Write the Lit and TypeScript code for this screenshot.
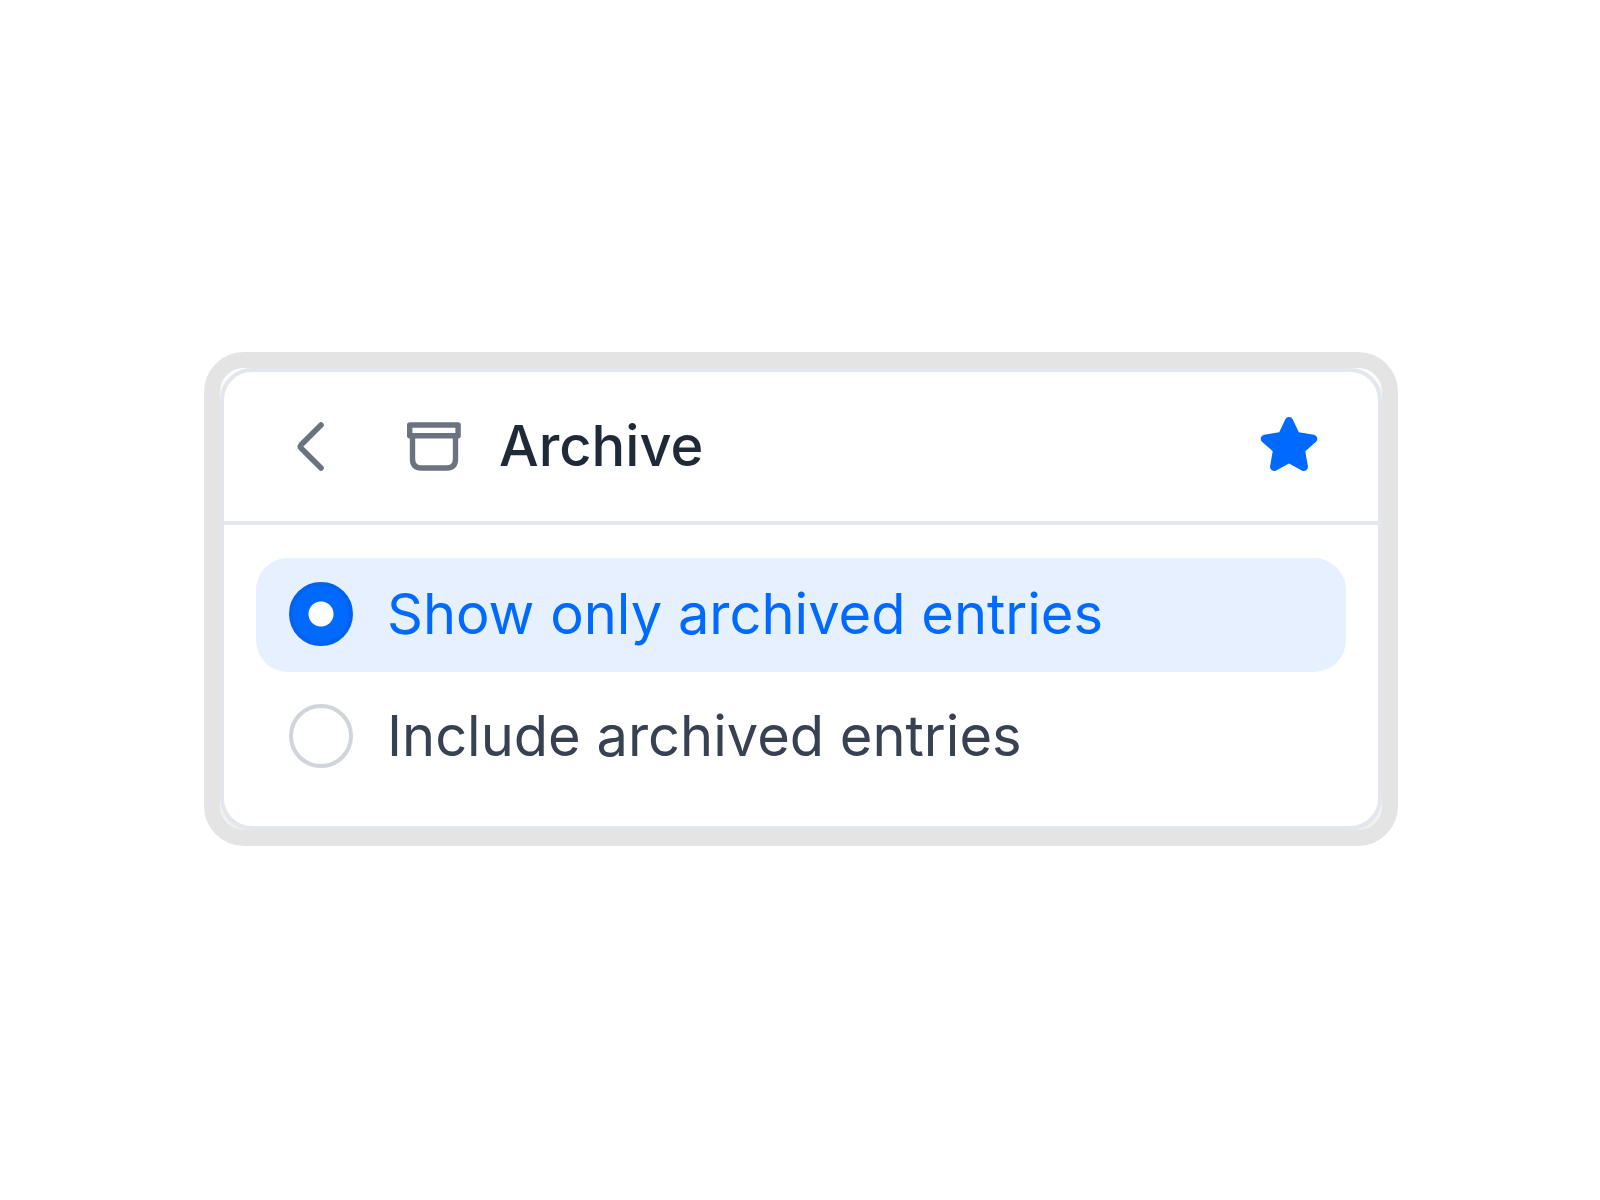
import { LitElement, html, css } from "lit";
import { customElement, state } from "lit/decorators.js";

interface Option {
  value: string;
  label: string;
}

const OPTIONS: Option[] = [
  { value: "only", label: "Show only archived entries" },
  { value: "include", label: "Include archived entries" },
];

@customElement("app-root")
export class AppRoot extends LitElement {
  static styles = css`
    :host {
      display: flex;
      align-items: center;
      box-sizing: border-box;
      min-height: 100vh;
      padding: 0 202px 2px 204px;
      background: #fff;
      font-family: Inter, "Liberation Sans", sans-serif;
      font-size: 56px;
      line-height: 82px;
      color: #374151;
    }
    .frame {
      flex: 1;
      min-width: 0;
      overflow: clip;
      border: 16px solid #e4e4e4;
      border-radius: 40px;
    }
    .card {
      border: 4px solid #e3e7ed;
      border-radius: 32px;
      background: #fff;
      box-shadow: 0 4px 8px rgba(0, 0, 0, 0.1);
    }
    .header {
      display: flex;
      align-items: center;
      padding: 33px 56px 34px 52px;
      border-bottom: 4px solid #e3e7ed;
    }
    .icon-button {
      display: flex;
      padding: 0;
      border: 0;
      background: none;
      color: #6b7280;
      cursor: pointer;
    }
    .icon-button.favourite {
      color: #0069ff;
    }
    .archive {
      margin: 0 37px 0 44px;
      color: #6b7280;
    }
    svg {
      display: block;
      flex: none;
    }
    .title {
      flex: 1;
      margin: 0;
      font-size: 56px;
      font-weight: 500;
      color: #1f2937;
    }
    .options {
      display: flex;
      flex-direction: column;
      gap: 8px;
      margin: 0;
      padding: 33px 32px 32px;
      border: 0;
    }
    .option {
      display: flex;
      align-items: center;
      gap: 34px;
      padding: 15px 32px 17px 33px;
      border-radius: 32px;
      cursor: pointer;
    }
    .option.selected {
      background: #e6f0ff;
      color: #0069ff;
    }
    .radio {
      appearance: none;
      flex: none;
      box-sizing: border-box;
      width: 64px;
      height: 64px;
      margin: 0;
      border: 4px solid #d0d5dc;
      border-radius: 50%;
      background: #fff;
      cursor: pointer;
    }
    .radio:checked {
      border-color: #0062ee;
      background: radial-gradient(circle, #fff 12px, #0069ff 13px);
    }
  `;

  @state() private selected = "only";

  render() {
    return html`
      <section class="frame">
        <div class="card">
          <header class="header">
            <button class="icon-button" type="button" aria-label="Back">
              <svg width="84" height="66" viewBox="0 0 84 66" fill="none" stroke="currentColor"
                stroke-width="5.6" stroke-linecap="round" stroke-linejoin="round">
                <path d="M45 12 25.200 31.800Q23.600 33.500 25.200 35.200L45 55" />
              </svg>
            </button>
            <svg class="archive" width="58" height="66" viewBox="0 0 58 66" fill="none"
              stroke="currentColor" stroke-width="5.4" stroke-linejoin="round" aria-hidden="true">
              <path d="M5.700 12H54.100V22.800H5.700Z" />
              <path d="M8.500 22.800V46Q8.500 55 17.500 55H42.500Q51.500 55 51.500 46V22.800" />
            </svg>
            <h1 class="title">Archive</h1>
            <button class="icon-button favourite" type="button" aria-label="Favourite" aria-pressed="true">
              <svg width="65" height="66" viewBox="0 0 65 66" fill="currentColor">
                <path d="M28.200 6.400A4.200 4.200 0 0 1 35.800 6.400L41.800 19.300 56.900 21.700A4.200 4.200 0 0 1 59 28.800L48.300 38.200 50.900 53.200A4.200 4.200 0 0 1 44.800 57.500L32 50.400 19.200 57.500A4.200 4.200 0 0 1 13.100 53.200L15.700 38.200 5 28.800A4.200 4.200 0 0 1 7.100 21.700L22.200 19.300Z" />
              </svg>
            </button>
          </header>
          <fieldset class="options" aria-label="Archive">
            ${OPTIONS.map(
              (o) => html`
                <label class="option ${o.value === this.selected ? "selected" : ""}">
                  <input
                    class="radio"
                    type="radio"
                    name="archive"
                    .value=${o.value}
                    .checked=${o.value === this.selected}
                    @change=${() => (this.selected = o.value)}
                  />
                  <span>${o.label}</span>
                </label>
              `
            )}
          </fieldset>
        </div>
      </section>
    `;
  }
}
